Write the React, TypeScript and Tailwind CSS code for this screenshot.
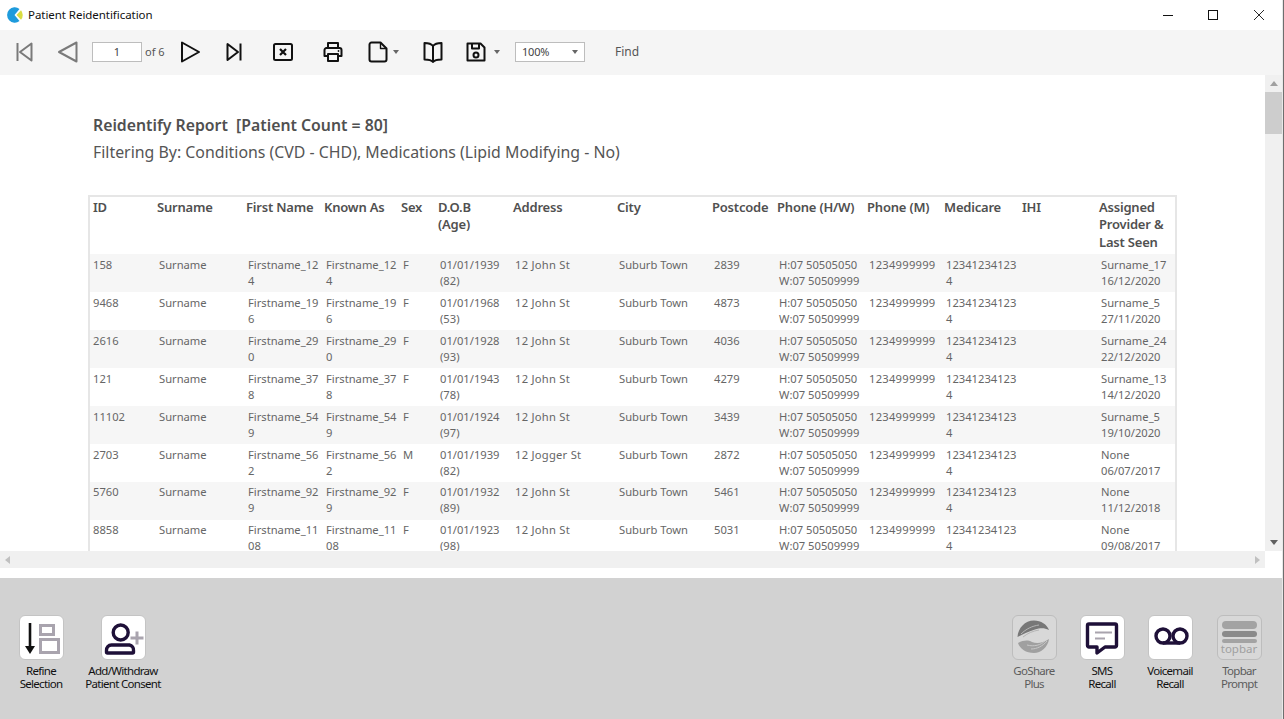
import React from "react";

const cols = "grid-cols-[64px_89px_78px_77px_37px_75px_104px_95px_65px_90px_77px_78px_77px_77px]";

const rows = [
  ["158", "124", "F", "1939", "82", "12 John St", "2839", "Surname_17", "16/12/2020"],
  ["9468", "196", "F", "1968", "53", "12 John St", "4873", "Surname_5", "27/11/2020"],
  ["2616", "290", "F", "1928", "93", "12 John St", "4036", "Surname_24", "22/12/2020"],
  ["121", "378", "F", "1943", "78", "12 John St", "4279", "Surname_13", "14/12/2020"],
  ["11102", "549", "F", "1924", "97", "12 John St", "3439", "Surname_5", "19/10/2020"],
  ["2703", "562", "M", "1939", "82", "12 Jogger St", "2872", "None", "06/07/2017"],
  ["5760", "929", "F", "1932", "89", "12 John St", "5461", "None", "11/12/2018"],
  ["8858", "1108", "F", "1923", "98", "12 John St", "5031", "None", "09/08/2017"],
];

const headers = ["ID", "Surname", "First Name", "Known As", "Sex", "D.O.B\n(Age)", "Address", "City", "Postcode", "Phone (H/W)", "Phone (M)", "Medicare", "IHI", "Assigned\nProvider &\nLast Seen"];

function Cell({ children, first, wide }: { children?: React.ReactNode; first?: boolean; wide?: boolean }) {
  const base = first ? "whitespace-pre-line" : "whitespace-pre-line pl-[2px]";
  return <div className={wide ? `${base} tracking-[0.25px]` : base}>{children}</div>;
}

function Caret() {
  return <svg width="6" height="4" viewBox="0 0 6 4" className="shrink-0"><path d="M0 0h6L3 4z" fill="#666" /></svg>;
}

function Ic({ w = 20, children }: { w?: number; children: React.ReactNode }) {
  return <svg width={w} height="22" viewBox={`0 0 ${w} 22`} fill="none" strokeWidth="2" strokeLinejoin="round" className="shrink-0 -mt-[1px]">{children}</svg>;
}

function Tile({ dim, children }: { dim?: boolean; children: React.ReactNode }) {
  return (
    <div className={dim
      ? "w-[45px] h-[45px] rounded-[6px] border border-[#bdbdbd] bg-[#d8d8d8] flex items-center justify-center"
      : "w-[45px] h-[45px] rounded-[6px] border border-[#c4c4c4] bg-white flex items-center justify-center"}>
      {children}
    </div>
  );
}

function Action({ label, dim, className, children }: { label: string; dim?: boolean; className: string; children: React.ReactNode }) {
  return (
    <div className={`absolute top-[37px] w-[90px] flex flex-col items-center ${className}`}>
      <Tile dim={dim}>{children}</Tile>
      <div className={dim
        ? "mt-[4px] text-center whitespace-pre-line text-[11.5px] leading-[13px] tracking-[-0.7px] text-[#5c5c5c]"
        : "mt-[4px] text-center whitespace-pre-line text-[11.5px] leading-[13px] tracking-[-0.7px] text-[#111]"}>{label}</div>
    </div>
  );
}

export default function App() {
  return (
    <div className="relative w-[1284px] h-[719px] overflow-hidden bg-white flex flex-col font-['Liberation_Sans',sans-serif]">
      {/* title bar */}
      <div className="relative h-[30px] shrink-0 flex items-center bg-white">
        <svg width="16" height="16" viewBox="0 0 16 16" className="ml-[7px]">
          <path d="M7.5 8 L12.500 1.900 A7.700 7.700 0 1 0 12.500 14.100 Z" fill="#1e9bdc" />
          <path d="M9.500 8 L14 3.200 A7.500 7.500 0 0 1 14 12.800 Z" fill="#d9dd42" />
        </svg>
        <span className="ml-[5px] text-[11.5px] tracking-[-0.05px] text-[#111] font-['Open_Sans',sans-serif]">Patient Reidentification</span>
        <svg width="12" height="12" viewBox="0 0 12 12" className="absolute left-[1162px] top-[9px]"><path d="M1 6.500h10" stroke="#111" /></svg>
        <svg width="12" height="12" viewBox="0 0 12 12" className="absolute left-[1207px] top-[9px]"><rect x="1.500" y="1.500" width="9" height="9" fill="none" stroke="#111" /></svg>
        <svg width="12" height="12" viewBox="0 0 12 12" className="absolute left-[1253px] top-[9px]"><path d="M1 1l10 10M11 1L1 11" stroke="#111" strokeWidth="0.9" /></svg>
      </div>

      {/* toolbar */}
      <div className="h-[45px] shrink-0 bg-[#f5f5f5] flex items-center">
        <div className="ml-[16px] flex"><Ic w={17}><path d="M1.500 2v18" stroke="#7a7a7a" /><path d="M15.500 2.500v17L4 11z" stroke="#7a7a7a" /></Ic></div>
        <div className="ml-[24px] flex"><Ic w={21}><path d="M19.500 1.500v19L2 11z" stroke="#7a7a7a" /></Ic></div>
        <div className="ml-[14px] -mt-[1px] w-[50px] h-[20px] bg-white border border-[#bdbdbd] text-center text-[11px] leading-[18px] text-[#444] font-['Open_Sans',sans-serif]">1</div>
        <div className="ml-[3px] -mt-[1px] w-[35px] text-[11px] text-[#555] font-['Open_Sans',sans-serif]">of 6</div>
        <Ic w={21}><path d="M2 1.500v19L19 11z" stroke="#111" /></Ic>
        <div className="ml-[25px] flex"><Ic w={16}><path d="M1.500 3v16L12 11z" stroke="#111" /><path d="M14.500 2.500v17" stroke="#111" /></Ic></div>
        <div className="ml-[31px] flex"><Ic><rect x="1" y="3" width="18" height="16" rx="1.500" stroke="#111" /><path d="M7 8l6 6M13 8l-6 6" stroke="#111" strokeWidth="2.200" /></Ic></div>
        <div className="ml-[30px] flex"><Ic><path d="M5 7V2h10v5" stroke="#111" /><path d="M5 15H1.500V9a2 2 0 0 1 2-2h13a2 2 0 0 1 2 2v6H15" stroke="#111" /><rect x="5" y="13" width="10" height="7" stroke="#111" /><circle cx="15.500" cy="10" r="0.900" fill="#111" /></Ic></div>
        <div className="ml-[25px] flex"><Ic><path d="M3.500 1.500h9l6 6v11a2 2 0 0 1-2 2h-13a2 2 0 0 1-2-2v-15a2 2 0 0 1 2-2z" stroke="#111" /><path d="M12.500 1.500v6h6" stroke="#111" strokeWidth="1.400" /></Ic></div>
        <div className="ml-[5px] -mt-[1px] flex"><Caret /></div>
        <div className="ml-[24px] flex"><Ic><path d="M10 5c-1.500-2-4-3-8.500-3v16.500c4.500 0 7 .500 8.500 2.500 1.500-2 4-2.500 8.500-2.500V2C14 2 11.500 3 10 5zM10 5v16" stroke="#111" /></Ic></div>
        <div className="ml-[23px] flex"><Ic><path d="M1.500 2.500h13l4 4v13h-17z" stroke="#111" /><path d="M6 2.500v5h7v-5" stroke="#111" /><circle cx="10" cy="14" r="2.500" stroke="#111" /></Ic></div>
        <div className="ml-[8px] -mt-[1px] flex"><Caret /></div>
        <div className="ml-[15px] -mt-[1px] w-[70px] h-[20px] bg-white border border-[#bdbdbd] flex items-center justify-between pl-[6px] pr-[6px] text-[11px] tracking-[-0.2px] text-[#444] font-['Open_Sans',sans-serif]">
          <span>100%</span><Caret />
        </div>
        <div className="ml-[30px] -mt-[1px] text-[12px] text-[#555] font-['Open_Sans',sans-serif]">Find</div>
      </div>

      {/* report area */}
      <div className="relative h-[476px] shrink-0 bg-white overflow-hidden font-['Open_Sans',sans-serif]">
        <div className="absolute left-[93px] top-[40px] text-[15.800px] leading-[20px] font-semibold text-[#505050] whitespace-pre">Reidentify Report  [Patient Count = 80]</div>
        <div className="absolute left-[93px] top-[67px] text-[15.880px] leading-[20px] text-[#555]">Filtering By: Conditions (CVD - CHD), Medications (Lipid Modifying - No)</div>

        <div className="absolute left-[88px] top-[120px] w-[1089px] border-2 border-[#e6e6e6] pl-[3px]">
          <div className={`grid ${cols} h-[57px] pt-[2px] text-[13px] leading-[17.300px] font-semibold text-[#505050] tracking-[-0.2px]`}>
            {headers.map((h, i) => <div key={i} className="whitespace-pre-line">{h}</div>)}
          </div>
          {rows.map((r, i) => (
            <div key={r[0]} className={`-ml-[3px] pl-[3px] grid ${cols} h-[38px] text-[11.200px] leading-[16px] text-[#666] ${i >= 6 ? "pt-[2px]" : "pt-[3px]"} ${i % 2 === 0 ? "bg-[#f6f6f6]" : "bg-white"}`}>
              <Cell first>{r[0]}</Cell>
              <Cell>Surname</Cell>
              <Cell>{`Firstname_${r[1].slice(0, 2)}\n${r[1].slice(2)}`}</Cell>
              <Cell>{`Firstname_${r[1].slice(0, 2)}\n${r[1].slice(2)}`}</Cell>
              <Cell>{r[2]}</Cell>
              <Cell>{`01/01/${r[3]}\n(${r[4]})`}</Cell>
              <Cell wide>{r[5]}</Cell>
              <Cell>Suburb Town</Cell>
              <Cell>{r[6]}</Cell>
              <Cell>{"H:07 50505050\nW:07 50509999"}</Cell>
              <Cell wide>1234999999</Cell>
              <Cell>{"12341234123\n4"}</Cell>
              <Cell />
              <Cell>{`${r[7]}\n${r[8]}`}</Cell>
            </div>
          ))}
        </div>

        {/* vertical scrollbar */}
        <div className="absolute left-[1265px] top-0 w-[17px] h-full bg-[#f0f0f0]">
          <svg width="8" height="5" viewBox="0 0 8 5" className="absolute left-[5px] top-[6px]"><path d="M4 0l4 5H0z" fill="#a0a0a0" /></svg>
          <div className="absolute top-[17px] left-0 w-full h-[42px] bg-[#cdcdcd]" />
          <svg width="8" height="5" viewBox="0 0 8 5" className="absolute left-[5px] top-[465px]"><path d="M0 0h8L4 5z" fill="#606060" /></svg>
        </div>
      </div>

      {/* horizontal scrollbar */}
      <div className="relative h-[17px] shrink-0 bg-[#f0f0f0] w-[1265px]">
        <svg width="5" height="8" viewBox="0 0 5 8" className="absolute left-[5px] top-[5px]"><path d="M5 0v8L0 4z" fill="#c0c0c0" /></svg>
        <svg width="5" height="8" viewBox="0 0 5 8" className="absolute left-[1255px] top-[5px]"><path d="M0 0v8l5-4z" fill="#c0c0c0" /></svg>
      </div>
      <div className="h-[10px] shrink-0 bg-white" />

      {/* bottom panel */}
      <div className="relative flex-1 bg-[#d2d2d2]">
        <Action label={"Refine\nSelection"} className="left-[-4px]">
          <svg width="43" height="43" viewBox="0 0 43 43" fill="none">
            <path d="M10 7v25" stroke="#111" strokeWidth="2.600" />
            <path d="M5 30h10l-5 8z" fill="#111" />
            <rect x="20.500" y="9.500" width="13" height="9" stroke="#a9a4ae" strokeWidth="3" />
            <rect x="20.500" y="23.500" width="18" height="13" stroke="#a9a4ae" strokeWidth="3" />
          </svg>
        </Action>
        <Action label={"Add/Withdraw\nPatient Consent"} className="left-[78px]">
          <svg width="43" height="43" viewBox="0 0 43 43" fill="none">
            <circle cx="18.700" cy="16.500" r="7.500" stroke="#1e1038" strokeWidth="3.400" />
            <path d="M4.500 36v-1.500a5 5 0 0 1 5-5.500h18a5 5 0 0 1 4 5.500V36a1 1 0 0 1-1 1H5.500a1 1 0 0 1-1-1z" stroke="#1e1038" strokeWidth="3.400" strokeLinejoin="round" />
            <path d="M35 15.500v13M28.500 22h13" stroke="#a9a4ae" strokeWidth="3" />
          </svg>
        </Action>
        <Action label={"GoShare\nPlus"} dim className="left-[989px]">
          <svg width="43" height="43" viewBox="0 0 43 43" fill="none">
            <path d="M4.500 21C5 12 12 4.500 21 4.500c7 0 13 4 15 9.500-5-2.500-9-2-14-.500-7 2-12 5-17.500 7.500z" fill="#777" />
            <path d="M8 18c5-5 11-8 18-9M10 21c5-4 10-6 16-7" stroke="#b5b5b5" strokeWidth="1" />
            <path d="M5 27c6-3 10-3 14-1 5 2 11 1 17-3-1 8-8 14-15 14C13 37 7 33 5 27z" fill="#a0a0a0" />
            <path d="M18 33c6 0 12-3 16-8M14 29c7 2 14 0 18-4" stroke="#c8c8c8" strokeWidth="1" />
          </svg>
        </Action>
        <Action label={"SMS\nRecall"} className="left-[1057px]">
          <svg width="43" height="43" viewBox="0 0 43 43" fill="none">
            <path d="M8 8h26a1.500 1.500 0 0 1 1.500 1.500v20a1.500 1.500 0 0 1-1.500 1.500H24l-8 6v-6H8a1.500 1.500 0 0 1-1.500-1.500v-20A1.500 1.500 0 0 1 8 8z" stroke="#1e1038" strokeWidth="3.400" strokeLinejoin="round" />
            <path d="M14 16.500h17M14 22.500h10" stroke="#a9a4ae" strokeWidth="2" />
          </svg>
        </Action>
        <Action label={"Voicemail\nRecall"} className="left-[1125px]">
          <svg width="43" height="43" viewBox="0 0 43 43" fill="none">
            <circle cx="14" cy="20" r="7" stroke="#1e1038" strokeWidth="3.400" />
            <circle cx="31" cy="20" r="7" stroke="#1e1038" strokeWidth="3.400" />
            <path d="M14 27h17" stroke="#1e1038" strokeWidth="3.400" />
          </svg>
        </Action>
        <Action label={"Topbar\nPrompt"} dim className="left-[1194px]">
          <div className="w-[36px] flex flex-col items-center">
            <div className="w-[35px] h-[8px] rounded-[4px] bg-[#a3a3a3]" />
            <div className="mt-[2px] w-[35px] h-[6px] rounded-[3px] bg-[#8a8a8a]" />
            <div className="mt-[2px] w-[35px] h-[4px] rounded-[2px] bg-[#a3a3a3]" />
            <div className="text-[11.500px] leading-[12px] text-[#a0a0a0] font-['Open_Sans',sans-serif]">topbar</div>
          </div>
        </Action>
      </div>

      {/* window edge */}
      <div className="absolute right-0 top-0 w-[2px] h-full bg-[#e8e8e8] border-r border-[#6e6e6e]" />
    </div>
  );
}
